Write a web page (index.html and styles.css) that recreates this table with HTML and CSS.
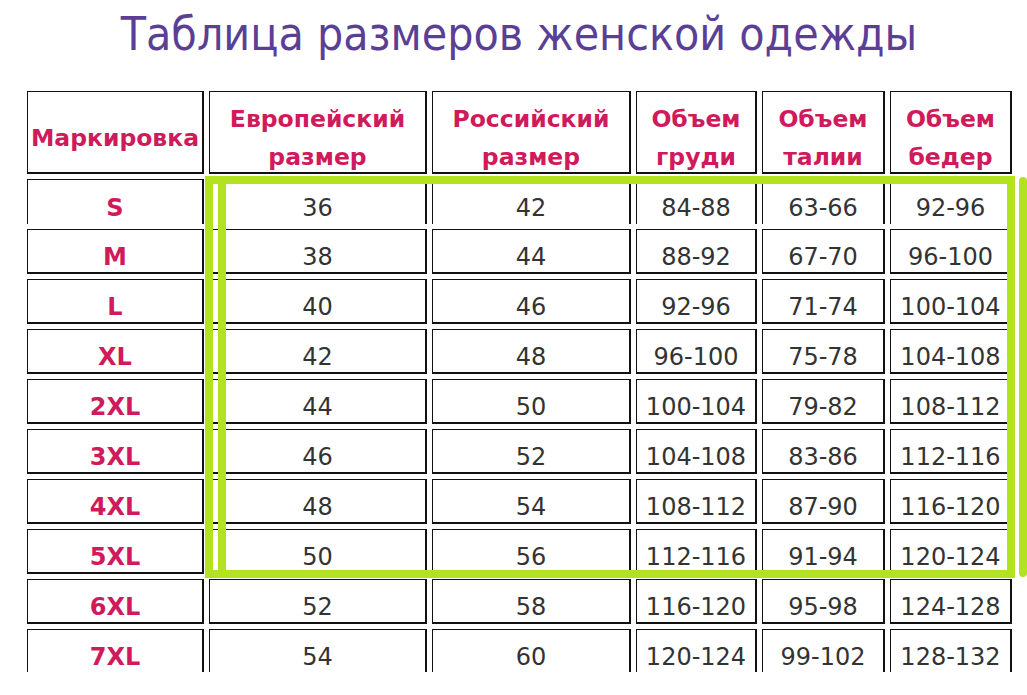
FILE: index.html
```html
<!DOCTYPE html>
<html lang="ru">
<head>
<meta charset="utf-8">
<title>Таблица размеров женской одежды</title>
<link rel="stylesheet" href="styles.css">
</head>
<body>
<div class="page">
  <h1 class="title">Таблица размеров женской одежды</h1>
  <div class="grid">
    <div class="cell head single">Маркировка</div>
    <div class="cell head">Европейский<br>размер</div>
    <div class="cell head">Российский<br>размер</div>
    <div class="cell head">Объем<br>груди</div>
    <div class="cell head">Объем<br>талии</div>
    <div class="cell head">Объем<br>бедер</div>

    <div class="cell mark nob">S</div><div class="cell nob">36</div><div class="cell nob">42</div><div class="cell nob">84-88</div><div class="cell nob">63-66</div><div class="cell nob">92-96</div>
    <div class="cell mark">M</div><div class="cell">38</div><div class="cell">44</div><div class="cell">88-92</div><div class="cell">67-70</div><div class="cell">96-100</div>
    <div class="cell mark">L</div><div class="cell">40</div><div class="cell">46</div><div class="cell">92-96</div><div class="cell">71-74</div><div class="cell">100-104</div>
    <div class="cell mark">XL</div><div class="cell">42</div><div class="cell">48</div><div class="cell">96-100</div><div class="cell">75-78</div><div class="cell">104-108</div>
    <div class="cell mark">2XL</div><div class="cell">44</div><div class="cell">50</div><div class="cell">100-104</div><div class="cell">79-82</div><div class="cell">108-112</div>
    <div class="cell mark">3XL</div><div class="cell">46</div><div class="cell">52</div><div class="cell">104-108</div><div class="cell">83-86</div><div class="cell">112-116</div>
    <div class="cell mark">4XL</div><div class="cell">48</div><div class="cell">54</div><div class="cell">108-112</div><div class="cell">87-90</div><div class="cell">116-120</div>
    <div class="cell mark">5XL</div><div class="cell">50</div><div class="cell">56</div><div class="cell">112-116</div><div class="cell">91-94</div><div class="cell">120-124</div>
    <div class="cell mark">6XL</div><div class="cell">52</div><div class="cell">58</div><div class="cell">116-120</div><div class="cell">95-98</div><div class="cell">124-128</div>
    <div class="cell mark last">7XL</div><div class="cell last">54</div><div class="cell last">60</div><div class="cell last">120-124</div><div class="cell last">99-102</div><div class="cell last">128-132</div>
  </div>
  <div class="hl hl-frame"></div>
  <div class="hl hl-inner"></div>
  <div class="hl hl-outer"></div>
</div>
</body>
</html>
```

FILE: styles.css
```css
html, body {
  margin: 0;
  padding: 0;
  background: #ffffff;
}
body {
  width: 1027px;
  height: 695px;
  overflow: hidden;
}
.page {
  position: relative;
  width: 1027px;
  height: 695px;
}
.title {
  margin: 0;
  padding: 8px 0 0 11px;
  height: 83px;
  box-sizing: border-box;
  text-align: center;
  font-family: "DejaVu Sans Condensed", "DejaVu Sans", sans-serif;
  font-weight: normal;
  font-size: 46px;
  line-height: 52px;
  color: #5b3f95;
}
.grid {
  display: grid;
  grid-template-columns: 177px 218px 199px 121px 123px 122px;
  grid-template-rows: 83px repeat(9, 45px) 43px;
  column-gap: 5px;
  row-gap: 5px;
  margin: 8px 0 0 27px;
}
.cell {
  box-sizing: border-box;
  border-style: solid;
  border-color: #111111;
  border-width: 1px 2px 2px 1px;
  display: flex;
  align-items: center;
  justify-content: center;
  text-align: center;
  padding-top: 11px;
  font-family: "DejaVu Sans", Verdana, sans-serif;
  font-size: 24px;
  color: #333333;
  white-space: nowrap;
}
.cell.nob {
  border-bottom-width: 0;
}
.cell.last {
  border-bottom-width: 0;
}
.head {
  font-weight: bold;
  font-size: 23.5px;
  line-height: 38px;
  color: #cf1a5b;
  padding-top: 12px;
}
.mark {
  font-weight: bold;
  font-size: 24px;
  color: #cf1a5b;
}
.hl {
  position: absolute;
  box-sizing: border-box;
}
.hl-frame {
  left: 205px;
  top: 176px;
  width: 810px;
  height: 402px;
  border: 8px solid #b3e320;
}
.hl-inner {
  left: 218px;
  top: 184px;
  width: 8px;
  height: 386px;
  background: #b3e320;
}
.hl-outer {
  left: 1019px;
  top: 177px;
  width: 8px;
  height: 400px;
  border-radius: 4px;
  background: #b3e320;
}
```
